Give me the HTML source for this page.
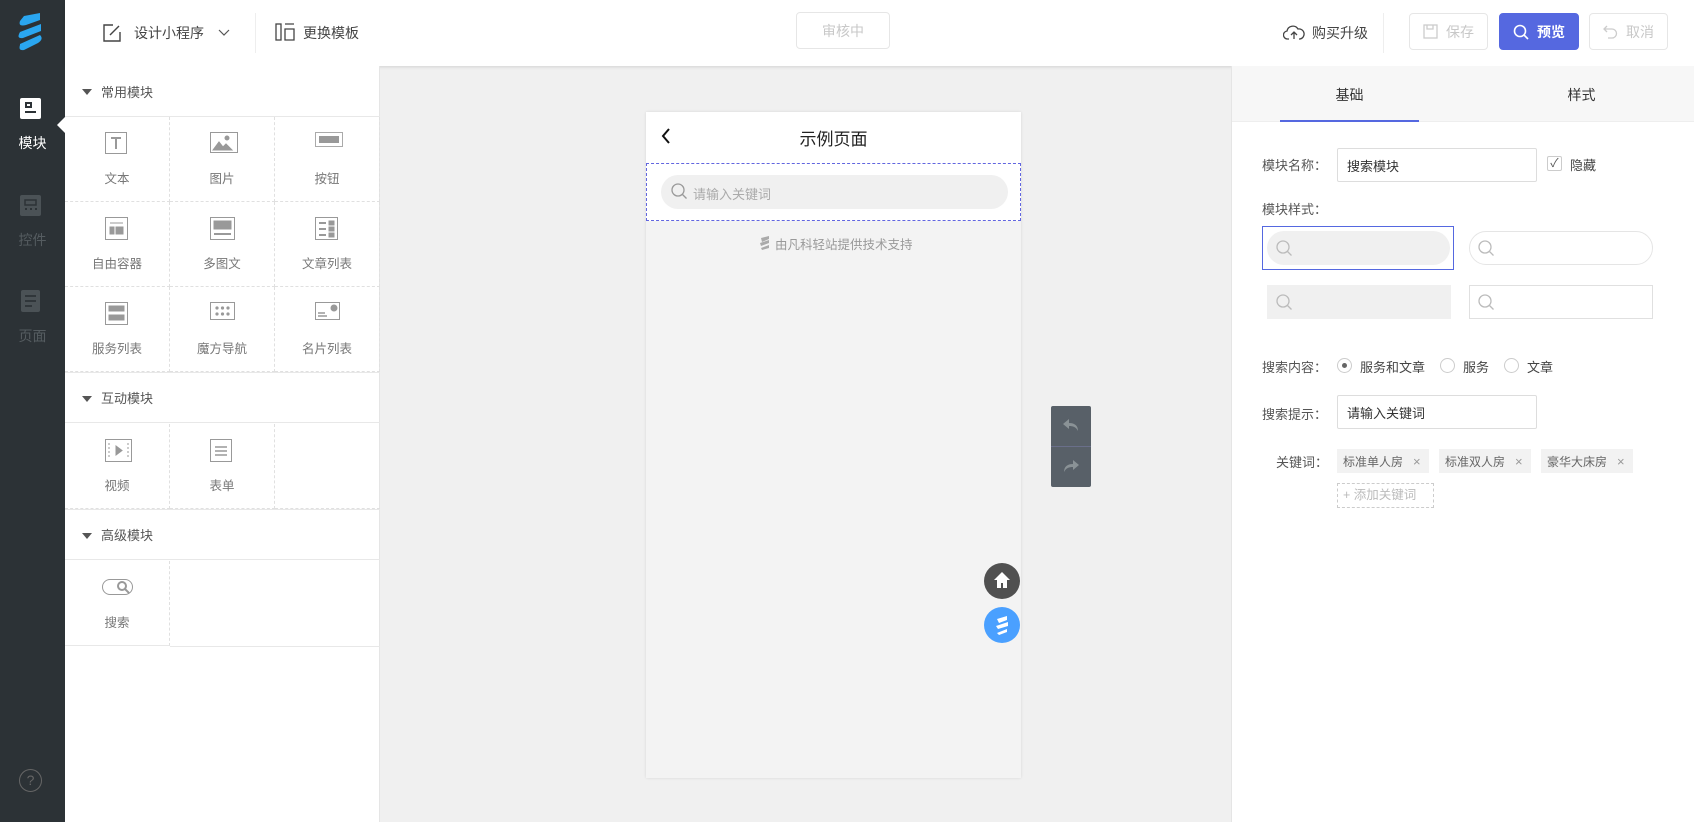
<!DOCTYPE html>
<html><head><meta charset="utf-8"><style>
*{box-sizing:border-box;margin:0;padding:0}
body{width:1694px;height:822px;overflow:hidden;background:#f0f0f0;font-family:"Liberation Sans","Noto Sans CJK SC",sans-serif;font-size:13px;color:#333;position:relative}
.a{position:absolute}
.side{left:0;top:0;width:65px;height:822px;background:#2c3236}
.hdr{left:65px;top:0;width:1629px;height:66px;background:#fff;box-shadow:0 1px 3px rgba(0,0,0,.12)}
.btn{position:absolute;border:1px solid #e6e6e6;border-radius:4px;color:#c8c8c8;font-size:14px;display:flex;align-items:center;justify-content:center;gap:8px}
.left{left:65px;top:66px;width:315px;height:756px;background:#fff;border-right:1px solid #e5e5e5}
.sec{position:absolute;left:0;width:315px;height:51px;border-bottom:1px solid #e8e8e8;font-size:13px;color:#555;display:flex;align-items:center;padding-left:36px}
.sec:before{content:"";position:absolute;left:17px;top:23px;border:5px solid transparent;border-top:6px solid #555}
.cell{position:absolute;width:105px;height:85px;border-right:1px dashed #e0e0e0;border-bottom:1px dashed #e0e0e0;text-align:center;color:#777;font-size:12.5px}
.cell svg{position:absolute;left:40px;top:15px}
.cell span{position:absolute;left:0;right:0;top:51px}
.right{left:1231px;top:66px;width:463px;height:756px;background:#fff;border-left:1px solid #e5e5e5}
.lbl{position:absolute;font-size:13px;color:#555}
.inp{position:absolute;border:1px solid #ddd;border-radius:2px;font-size:13px;color:#333;padding-left:9px;display:flex;align-items:center}
.tag{position:absolute;background:#f2f2f2;height:24px;font-size:12px;color:#666;display:flex;align-items:center;padding-left:6px;top:449px}
.tag b{font-weight:normal;color:#999;margin-left:10px;font-size:13px}
.rad{position:absolute;width:15px;height:15px;border:1px solid #ccc;border-radius:50%;top:358px}
</style></head><body>
<div class="a side">
 <svg class="a" style="left:14px;top:12px" width="32" height="40" viewBox="0 0 32 40"><path d="M10 4 L26 1 L26 8 L12 13 Q4 15 6 9Z" fill="#2aa6f0"/><path d="M6 20 L27 12 L27 19 L9 26 Q3 27 5 22Z" fill="#2aa6f0"/><path d="M6 32 L26 23 Q30 27 24 31 L10 38 Q4 39 6 33Z" fill="#2aa6f0"/></svg>
 <div class="a" style="left:20px;top:98px;width:21px;height:21px;background:#fff;border-radius:2px"><div class="a" style="left:5px;top:4px;width:7px;height:6px;border:2px solid #2c3236"></div><div class="a" style="left:5px;top:13px;width:11px;height:2px;background:#2c3236"></div></div>
 <div class="a" style="left:0;width:65px;top:133px;text-align:center;color:#fff;font-size:14px">模块</div>
 <div class="a" style="left:57px;top:117px;border:8px solid transparent;border-right-color:#fff;border-left:0"></div>
 <svg class="a" style="left:20px;top:195px" width="21" height="21"><rect width="21" height="21" rx="2" fill="#4b5256"/><path d="M5 5h11v5H5z" fill="none" stroke="#2c3236" stroke-width="1.5"/><path d="M5 14h2M10 14h2M15 14h2" stroke="#2c3236" stroke-width="2"/></svg>
 <div class="a" style="left:0;width:65px;top:230px;text-align:center;color:#555c60;font-size:14px">控件</div>
 <svg class="a" style="left:21px;top:290px" width="19" height="22"><rect width="19" height="22" rx="2" fill="#4b5256"/><path d="M4 6h11M4 11h11M4 16h7" stroke="#2c3236" stroke-width="1.8"/></svg>
 <div class="a" style="left:0;width:65px;top:326px;text-align:center;color:#555c60;font-size:14px">页面</div>
 <div class="a" style="left:19px;top:769px;width:23px;height:23px;border:1px solid #666;border-radius:50%;color:#666;text-align:center;line-height:21px;font-size:14px">?</div>
</div>
<div class="a hdr">
 <svg class="a" style="left:38px;top:24px" width="18" height="18" viewBox="0 0 18 18" fill="none" stroke="#444" stroke-width="1.4"><path d="M10 1H1v16h16V8"/><path d="M7 11l9-9"/></svg>
 <div class="a" style="left:69px;top:23px;font-size:14px;color:#444">设计小程序</div>
 <svg class="a" style="left:153px;top:29px" width="12" height="8"><path d="M1 1l5 5 5-5" stroke="#555" fill="none" stroke-width="1.2"/></svg>
 <div class="a" style="left:190px;top:13px;width:1px;height:40px;background:#eee"></div>
 <svg class="a" style="left:210px;top:23px" width="20" height="18" fill="none" stroke="#444" stroke-width="1.3"><rect x="1" y="1" width="5" height="16"/><path d="M10 1h9M10 6h9v11h-9z"/></svg>
 <div class="a" style="left:238px;top:23px;font-size:14px;color:#444">更换模板</div>
 <div class="btn" style="left:731px;top:12px;width:94px;height:37px">审核中</div>
 <svg class="a" style="left:1218px;top:24px" width="22" height="16" fill="none" stroke="#444" stroke-width="1.3"><path d="M6 15H5a4 4 0 0 1-1-8 6 6 0 0 1 11-2 5 5 0 0 1 2 10h-1"/><path d="M11 15V8M8 11l3-3 3 3"/></svg>
 <div class="a" style="left:1247px;top:23px;font-size:14px;color:#444">购买升级</div>
 <div class="a" style="left:1318px;top:13px;width:1px;height:40px;background:#eee"></div>
 <div class="btn" style="left:1344px;top:13px;width:79px;height:37px"><svg width="15" height="15" fill="none" stroke="#ccc" stroke-width="1.3"><rect x="1" y="1" width="13" height="13"/><path d="M4 1v4h6V1"/></svg>保存</div>
 <div class="btn" style="left:1434px;top:13px;width:80px;height:37px;background:#5568e0;border-color:#5568e0;color:#fff;font-weight:bold"><svg width="16" height="16" fill="none" stroke="#fff" stroke-width="1.6"><circle cx="7" cy="7" r="5.5"/><path d="M11 11l4 4"/></svg>预览</div>
 <div class="btn" style="left:1524px;top:13px;width:79px;height:37px"><svg width="15" height="15" fill="none" stroke="#ccc" stroke-width="1.3"><path d="M4 2L1 5l3 3M1 5h8a4.5 4.5 0 0 1 0 9H5"/></svg>取消</div>
</div>
<div class="a left">
 <div class="sec" style="top:0">常用模块</div>
 <div class="cell" style="left:0;top:51px"><svg width="24" height="24" fill="none" stroke="#999"><rect x=".5" y=".5" width="21" height="21"/><path d="M6 6h10M11 6v11" stroke-width="2"/></svg><span>文本</span></div>
 <div class="cell" style="left:105px;top:51px"><svg width="28" height="22" fill="none" stroke="#999"><rect x=".5" y=".5" width="27" height="20"/><path d="M3 18l6-8 4 5 3-3 6 6z" fill="#999"/><circle cx="17" cy="6" r="2" fill="#999"/></svg><span>图片</span></div>
 <div class="cell" style="left:210px;top:51px"><svg width="28" height="16" fill="none" stroke="#aaa"><rect x=".5" y=".5" width="27" height="14"/><rect x="4" y="4" width="20" height="7" fill="#999" stroke="none"/></svg><span>按钮</span></div>
 <div class="cell" style="left:0;top:136px"><svg width="24" height="24" fill="none" stroke="#999"><rect x=".5" y=".5" width="22" height="22"/><path d="M5 6h13" /><rect x="5" y="10" width="4" height="7" fill="#999"/><rect x="11" y="10" width="7" height="7" fill="#999"/></svg><span>自由容器</span></div>
 <div class="cell" style="left:105px;top:136px"><svg width="26" height="24" fill="none" stroke="#999"><rect x=".5" y=".5" width="24" height="22"/><rect x="4" y="4" width="17" height="8" fill="#999"/><path d="M4 17h17" stroke-width="2"/></svg><span>多图文</span></div>
 <div class="cell" style="left:210px;top:136px"><svg width="24" height="24" fill="none" stroke="#999"><rect x=".5" y=".5" width="22" height="22"/><path d="M4 6h7M4 12h7M4 18h7" stroke-width="2"/><rect x="14" y="4" width="5" height="4" fill="#999"/><rect x="14" y="10" width="5" height="4" fill="#999"/><rect x="14" y="16" width="5" height="4" fill="#999"/></svg><span>文章列表</span></div>
 <div class="cell" style="left:0;top:221px"><svg width="24" height="24" fill="none" stroke="#999"><rect x=".5" y=".5" width="22" height="22"/><rect x="4" y="4" width="15" height="5" fill="#999"/><rect x="4" y="13" width="15" height="5" fill="#999"/></svg><span>服务列表</span></div>
 <div class="cell" style="left:105px;top:221px"><svg width="26" height="20" fill="none" stroke="#999"><rect x=".5" y=".5" width="24" height="17"/><g fill="#999" stroke="none"><circle cx="7" cy="6" r="1.6"/><circle cx="12.5" cy="6" r="1.6"/><circle cx="18" cy="6" r="1.6"/><circle cx="7" cy="12" r="1.6"/><circle cx="12.5" cy="12" r="1.6"/><circle cx="18" cy="12" r="1.6"/></g></svg><span>魔方导航</span></div>
 <div class="cell" style="left:210px;top:221px"><svg width="26" height="20" fill="none" stroke="#999"><rect x=".5" y=".5" width="24" height="17"/><path d="M3 11h7M3 14h9" stroke-width="1.5"/><circle cx="19" cy="6" r="3" fill="#999"/></svg><span>名片列表</span></div>
 <div class="sec" style="top:306px;border-top:1px solid #e8e8e8">互动模块</div>
 <div class="cell" style="left:0;top:358px"><svg width="28" height="24" fill="none" stroke="#999"><rect x=".5" y=".5" width="26" height="22"/><path d="M4 4v16M23 4v16" stroke-dasharray="2 2"/><path d="M11 7v9l6-4.5z" fill="#999"/></svg><span>视频</span></div>
 <div class="cell" style="left:105px;top:358px"><svg width="24" height="24" fill="none" stroke="#999"><rect x=".5" y=".5" width="21" height="22"/><path d="M5 8h12M5 12h12M5 16h12" stroke-width="1.5"/></svg><span>表单</span></div>
 <div class="cell" style="left:210px;top:358px;border-right:0"></div>
 <div class="sec" style="top:443px;border-top:1px solid #e8e8e8">高级模块</div>
 <div class="cell" style="left:0;top:495px;height:85px;border-bottom:1px solid #e8e8e8"><svg width="32" height="18" style="left:37px;top:18px" fill="none" stroke="#999"><rect x=".5" y=".5" width="30" height="15" rx="7.5"/><circle cx="20" cy="7" r="4" stroke-width="2"/><path d="M23 10l4 4" stroke-width="2"/></svg><span>搜索</span></div>
 <div class="a" style="left:105px;top:495px;width:210px;height:86px;border-bottom:1px solid #e8e8e8"></div>
</div>
<!-- phone -->
<div class="a" style="left:646px;top:112px;width:375px;height:666px;background:#f3f3f3;box-shadow:0 0 3px rgba(0,0,0,.1)"></div>
<div class="a" style="left:646px;top:112px;width:375px;height:51px;background:#fff"></div>
<svg class="a" style="left:661px;top:128px" width="10" height="16"><path d="M8 1L2 8l6 7" stroke="#111" stroke-width="2" fill="none"/></svg>
<div class="a" style="left:646px;width:375px;top:125px;text-align:center;font-size:17px;color:#222">示例页面</div>
<div class="a" style="left:646px;top:163px;width:375px;height:58px;background:#fff;border:1px dashed #6266e0"></div>
<div class="a" style="left:661px;top:175px;width:347px;height:34px;background:#f0f0f0;border-radius:17px"></div>
<svg class="a" style="left:671px;top:183px" width="17" height="17" fill="none" stroke="#999" stroke-width="1.3"><circle cx="7" cy="7" r="6"/><path d="M11.5 11.5l4 4"/></svg>
<div class="a" style="left:693px;top:184px;font-size:13px;color:#aaa">请输入关键词</div>
<svg class="a" style="left:759px;top:236px" width="11" height="14"><path d="M2 2l8-2v3L3 6zM1 7l9-3v3L2 10zM2 12l8-3v3L3 14z" fill="#aaa"/></svg>
<div class="a" style="left:775px;top:234px;font-size:12.5px;color:#999">由凡科轻站提供技术支持</div>
<div class="a" style="left:1051px;top:406px;width:40px;height:81px;background:#586068;border-radius:2px"><div class="a" style="left:0;top:40px;width:40px;height:1px;background:#6a6f8a"></div>
<svg class="a" style="left:11px;top:12px" width="18" height="14"><path d="M7 1L1 6l6 5V8c4 0 7 1 9 5 0-5-3-8-9-8z" fill="#8a9296"/></svg>
<svg class="a" style="left:11px;top:53px" width="18" height="14"><path d="M11 1l6 5-6 5V8c-4 0-7 1-9 5 0-5 3-8 9-8z" fill="#8a9296"/></svg></div>
<div class="a" style="left:984px;top:563px;width:36px;height:36px;border-radius:50%;background:#505050"></div>
<svg class="a" style="left:993px;top:571px" width="18" height="18"><path d="M9 1L1 9h3v8h4v-5h2v5h4V9h3z" fill="#fff"/></svg>
<div class="a" style="left:984px;top:607px;width:36px;height:36px;border-radius:50%;background:#4aa0ff"></div>
<svg class="a" style="left:993px;top:614px" width="18" height="22"><path d="M4 5l10-3v4L6 9zM3 12l12-4v4L5 15zM4 19l10-4v3L6 21z" fill="#fff"/></svg>
<!-- right panel -->
<div class="a right">
 <div class="a" style="left:0;top:0;width:463px;height:56px;background:#f7f7f7;border-bottom:1px solid #eee"></div>
 <div class="a" style="left:48px;top:54px;width:139px;height:2px;background:#5568e0"></div>
 <div class="a" style="left:48px;width:139px;top:19px;text-align:center;font-size:14px;color:#333">基础</div>
 <div class="a" style="left:280px;width:139px;top:19px;text-align:center;font-size:14px;color:#333">样式</div>
</div>
<div class="lbl" style="left:1262px;top:155px">模块名称：</div>
<div class="inp" style="left:1337px;top:148px;width:200px;height:34px">搜索模块</div>
<div class="a" style="left:1547px;top:156px;width:15px;height:15px;border:1px solid #ccc;border-radius:2px;color:#555;font-size:12px;line-height:13px;text-align:center">✓</div>
<div class="lbl" style="left:1570px;top:155px;color:#444">隐藏</div>
<div class="lbl" style="left:1262px;top:199px">模块样式：</div>
<div class="a" style="left:1262px;top:226px;width:192px;height:44px;border:1px solid #5568e0"></div>
<div class="a" style="left:1267px;top:231px;width:183px;height:34px;background:#f0f0f0;border-radius:17px"></div>
<div class="a" style="left:1469px;top:231px;width:184px;height:34px;border:1px solid #e5e5e5;border-radius:17px"></div>
<div class="a" style="left:1267px;top:285px;width:184px;height:34px;background:#f0f0f0"></div>
<div class="a" style="left:1469px;top:285px;width:184px;height:34px;border:1px solid #e0e0e0"></div>
<svg class="a" style="left:1276px;top:240px" width="17" height="17" fill="none" stroke="#bbb" stroke-width="1.3"><circle cx="7" cy="7" r="6"/><path d="M11.5 11.5l4 4"/></svg>
<svg class="a" style="left:1478px;top:240px" width="17" height="17" fill="none" stroke="#bbb" stroke-width="1.3"><circle cx="7" cy="7" r="6"/><path d="M11.5 11.5l4 4"/></svg>
<svg class="a" style="left:1276px;top:294px" width="17" height="17" fill="none" stroke="#bbb" stroke-width="1.3"><circle cx="7" cy="7" r="6"/><path d="M11.5 11.5l4 4"/></svg>
<svg class="a" style="left:1478px;top:294px" width="17" height="17" fill="none" stroke="#bbb" stroke-width="1.3"><circle cx="7" cy="7" r="6"/><path d="M11.5 11.5l4 4"/></svg>
<div class="lbl" style="left:1262px;top:357px">搜索内容：</div>
<div class="rad" style="left:1337px"><div class="a" style="left:4px;top:4px;width:5px;height:5px;border-radius:50%;background:#666"></div></div>
<div class="lbl" style="left:1360px;top:357px;color:#444">服务和文章</div>
<div class="rad" style="left:1440px"></div>
<div class="lbl" style="left:1463px;top:357px;color:#444">服务</div>
<div class="rad" style="left:1504px"></div>
<div class="lbl" style="left:1527px;top:357px;color:#444">文章</div>
<div class="lbl" style="left:1262px;top:404px">搜索提示：</div>
<div class="inp" style="left:1337px;top:395px;width:200px;height:34px">请输入关键词</div>
<div class="lbl" style="left:1276px;top:452px">关键词：</div>
<div class="tag" style="left:1337px;width:92px">标准单人房<b>×</b></div>
<div class="tag" style="left:1439px;width:92px">标准双人房<b>×</b></div>
<div class="tag" style="left:1541px;width:92px">豪华大床房<b>×</b></div>
<div class="a" style="left:1337px;top:483px;width:97px;height:25px;border:1px dashed #ccc;color:#bbb;font-size:12.5px;line-height:23px;padding-left:5px">+ 添加关键词</div>
</body></html>
